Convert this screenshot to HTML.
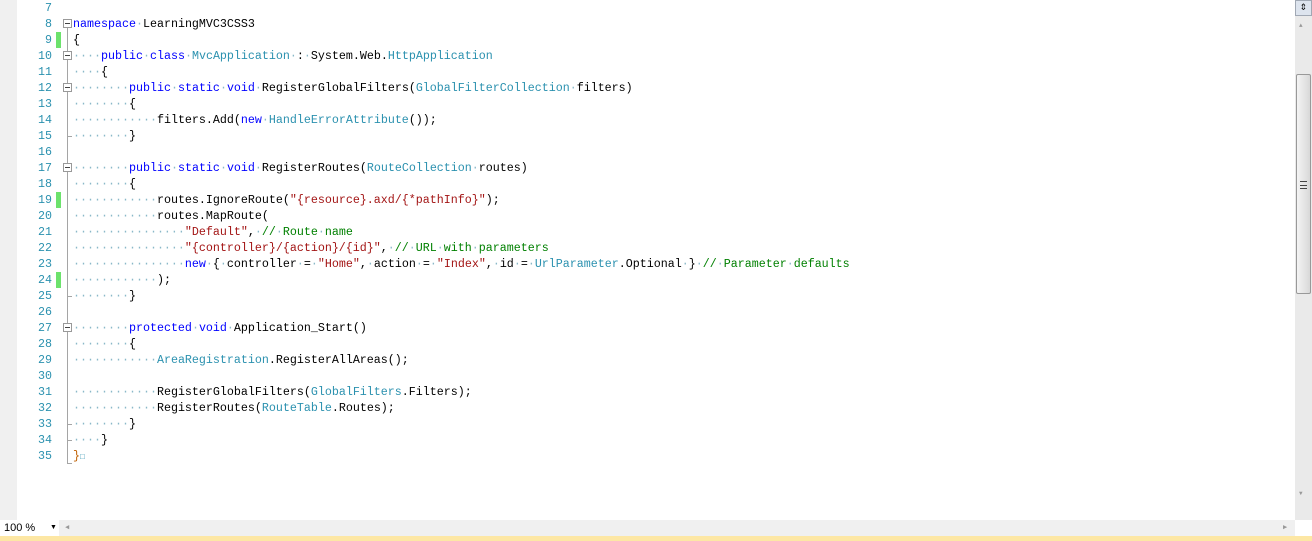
<!DOCTYPE html>
<html><head><meta charset="utf-8"><style>
*{margin:0;padding:0;box-sizing:border-box}
body{width:1312px;height:541px;overflow:hidden;background:#fff;position:relative;font-family:"Liberation Mono","DejaVu Sans Mono",monospace;font-size:11.67px}
#gut{position:absolute;left:0;top:0;width:17px;height:520px;background:#f0f0f0}
.ln{position:absolute;left:20px;width:32px;text-align:right;color:#2b91af;height:16px;line-height:16px}
.c{position:absolute;left:73px;height:16px;line-height:16px;white-space:pre;color:#000}
.d{color:#8ab8c8}.k{color:#0000ff}.t{color:#2b91af}.s{color:#a31515}.g{color:#008000}.b{color:#c06000}
.chg{position:absolute;left:56px;width:5px;height:16px;background:#6ce26c}
.fb{position:absolute;left:63px;width:9px;height:9px;border:1px solid #999;background:#fff}
.fb:after{content:"";position:absolute;left:1px;top:3px;width:5px;height:1px;background:#444}
.vl{position:absolute;left:67px;width:1px;background:#a5a5a5}
.tk{position:absolute;left:67px;width:5px;height:1px;background:#a5a5a5}
</style></head><body>
<div id="gut"></div>
<div class="ln" style="top:0">7</div><div class="ln" style="top:16px">8</div><div class="ln" style="top:32px">9</div><div class="ln" style="top:48px">10</div><div class="ln" style="top:64px">11</div><div class="ln" style="top:80px">12</div><div class="ln" style="top:96px">13</div><div class="ln" style="top:112px">14</div><div class="ln" style="top:128px">15</div><div class="ln" style="top:144px">16</div><div class="ln" style="top:160px">17</div><div class="ln" style="top:176px">18</div><div class="ln" style="top:192px">19</div><div class="ln" style="top:208px">20</div><div class="ln" style="top:224px">21</div><div class="ln" style="top:240px">22</div><div class="ln" style="top:256px">23</div><div class="ln" style="top:272px">24</div><div class="ln" style="top:288px">25</div><div class="ln" style="top:304px">26</div><div class="ln" style="top:320px">27</div><div class="ln" style="top:336px">28</div><div class="ln" style="top:352px">29</div><div class="ln" style="top:368px">30</div><div class="ln" style="top:384px">31</div><div class="ln" style="top:400px">32</div><div class="ln" style="top:416px">33</div><div class="ln" style="top:432px">34</div><div class="ln" style="top:448px">35</div>
<div class="chg" style="top:32px"></div><div class="chg" style="top:192px"></div><div class="chg" style="top:272px"></div>
<div class="vl" style="top:28px;height:436px"></div>
<div class="tk" style="top:136px"></div><div class="tk" style="top:296px"></div><div class="tk" style="top:424px"></div><div class="tk" style="top:440px"></div><div class="tk" style="top:463px"></div>
<div class="fb" style="top:19px"></div><div class="fb" style="top:51px"></div><div class="fb" style="top:83px"></div><div class="fb" style="top:163px"></div><div class="fb" style="top:323px"></div>
<div class="c" style="top:16px"><span class="k">namespace</span><span class="d">·</span>LearningMVC3CSS3</div>
<div class="c" style="top:32px">{</div>
<div class="c" style="top:48px"><span class="d">····</span><span class="k">public</span><span class="d">·</span><span class="k">class</span><span class="d">·</span><span class="t">MvcApplication</span><span class="d">·</span>:<span class="d">·</span>System.Web.<span class="t">HttpApplication</span></div>
<div class="c" style="top:64px"><span class="d">····</span>{</div>
<div class="c" style="top:80px"><span class="d">········</span><span class="k">public</span><span class="d">·</span><span class="k">static</span><span class="d">·</span><span class="k">void</span><span class="d">·</span>RegisterGlobalFilters(<span class="t">GlobalFilterCollection</span><span class="d">·</span>filters)</div>
<div class="c" style="top:96px"><span class="d">········</span>{</div>
<div class="c" style="top:112px"><span class="d">············</span>filters.Add(<span class="k">new</span><span class="d">·</span><span class="t">HandleErrorAttribute</span>());</div>
<div class="c" style="top:128px"><span class="d">········</span>}</div>
<div class="c" style="top:160px"><span class="d">········</span><span class="k">public</span><span class="d">·</span><span class="k">static</span><span class="d">·</span><span class="k">void</span><span class="d">·</span>RegisterRoutes(<span class="t">RouteCollection</span><span class="d">·</span>routes)</div>
<div class="c" style="top:176px"><span class="d">········</span>{</div>
<div class="c" style="top:192px"><span class="d">············</span>routes.IgnoreRoute(<span class="s">"{resource}.axd/{*pathInfo}"</span>);</div>
<div class="c" style="top:208px"><span class="d">············</span>routes.MapRoute(</div>
<div class="c" style="top:224px"><span class="d">················</span><span class="s">"Default"</span>,<span class="d">·</span><span class="g">//<span class="d">·</span>Route<span class="d">·</span>name</span></div>
<div class="c" style="top:240px"><span class="d">················</span><span class="s">"{controller}/{action}/{id}"</span>,<span class="d">·</span><span class="g">//<span class="d">·</span>URL<span class="d">·</span>with<span class="d">·</span>parameters</span></div>
<div class="c" style="top:256px"><span class="d">················</span><span class="k">new</span><span class="d">·</span>{<span class="d">·</span>controller<span class="d">·</span>=<span class="d">·</span><span class="s">"Home"</span>,<span class="d">·</span>action<span class="d">·</span>=<span class="d">·</span><span class="s">"Index"</span>,<span class="d">·</span>id<span class="d">·</span>=<span class="d">·</span><span class="t">UrlParameter</span>.Optional<span class="d">·</span>}<span class="d">·</span><span class="g">//<span class="d">·</span>Parameter<span class="d">·</span>defaults</span></div>
<div class="c" style="top:272px"><span class="d">············</span>);</div>
<div class="c" style="top:288px"><span class="d">········</span>}</div>
<div class="c" style="top:320px"><span class="d">········</span><span class="k">protected</span><span class="d">·</span><span class="k">void</span><span class="d">·</span>Application_Start()</div>
<div class="c" style="top:336px"><span class="d">········</span>{</div>
<div class="c" style="top:352px"><span class="d">············</span><span class="t">AreaRegistration</span>.RegisterAllAreas();</div>
<div class="c" style="top:384px"><span class="d">············</span>RegisterGlobalFilters(<span class="t">GlobalFilters</span>.Filters);</div>
<div class="c" style="top:400px"><span class="d">············</span>RegisterRoutes(<span class="t">RouteTable</span>.Routes);</div>
<div class="c" style="top:416px"><span class="d">········</span>}</div>
<div class="c" style="top:432px"><span class="d">····</span>}</div>
<div class="c" style="top:448px"><span class="b">}</span><span class="t" style="font-size:8px">□</span></div>
<!-- vertical scrollbar -->
<div style="position:absolute;left:1295px;top:0;width:17px;height:520px;background:#eaeaea"></div>
<div style="position:absolute;left:1295px;top:0;width:17px;height:16px;background:#dde4ee;border:1px solid #a0a8b4;font-size:12px;line-height:13px;text-align:center;color:#000">⇕</div>
<div style="position:absolute;left:1299px;top:22px;font-size:6px;color:#999">▲</div>
<div style="position:absolute;left:1296px;top:74px;width:15px;height:220px;border:1px solid #999;border-radius:2px;background:linear-gradient(90deg,#f4f4f4,#d8d8d8)"></div>
<div style="position:absolute;left:1300px;top:181px;width:7px;height:8px;border-top:1px solid #444;border-bottom:1px solid #444"><div style="margin-top:3px;height:1px;background:#444"></div></div>
<div style="position:absolute;left:1299px;top:490px;font-size:6px;color:#999">▼</div>
<!-- bottom bar -->
<div style="position:absolute;left:0;top:520px;width:1295px;height:16px;background:#f0f0f0"></div>
<div style="position:absolute;left:0;top:520px;width:59px;height:16px;background:#fff;font-family:'Liberation Sans',sans-serif;font-size:11px;line-height:16px;padding-left:4px">100 %<span style="position:absolute;left:50px;top:0;font-size:7px">▼</span></div>
<div style="position:absolute;left:65px;top:520px;font-size:7px;line-height:16px;color:#999">◀</div>
<div style="position:absolute;left:1283px;top:520px;font-size:7px;line-height:16px;color:#999">▶</div>
<div style="position:absolute;left:0;top:536px;width:1312px;height:5px;background:#fde7a4"></div>
</body></html>
